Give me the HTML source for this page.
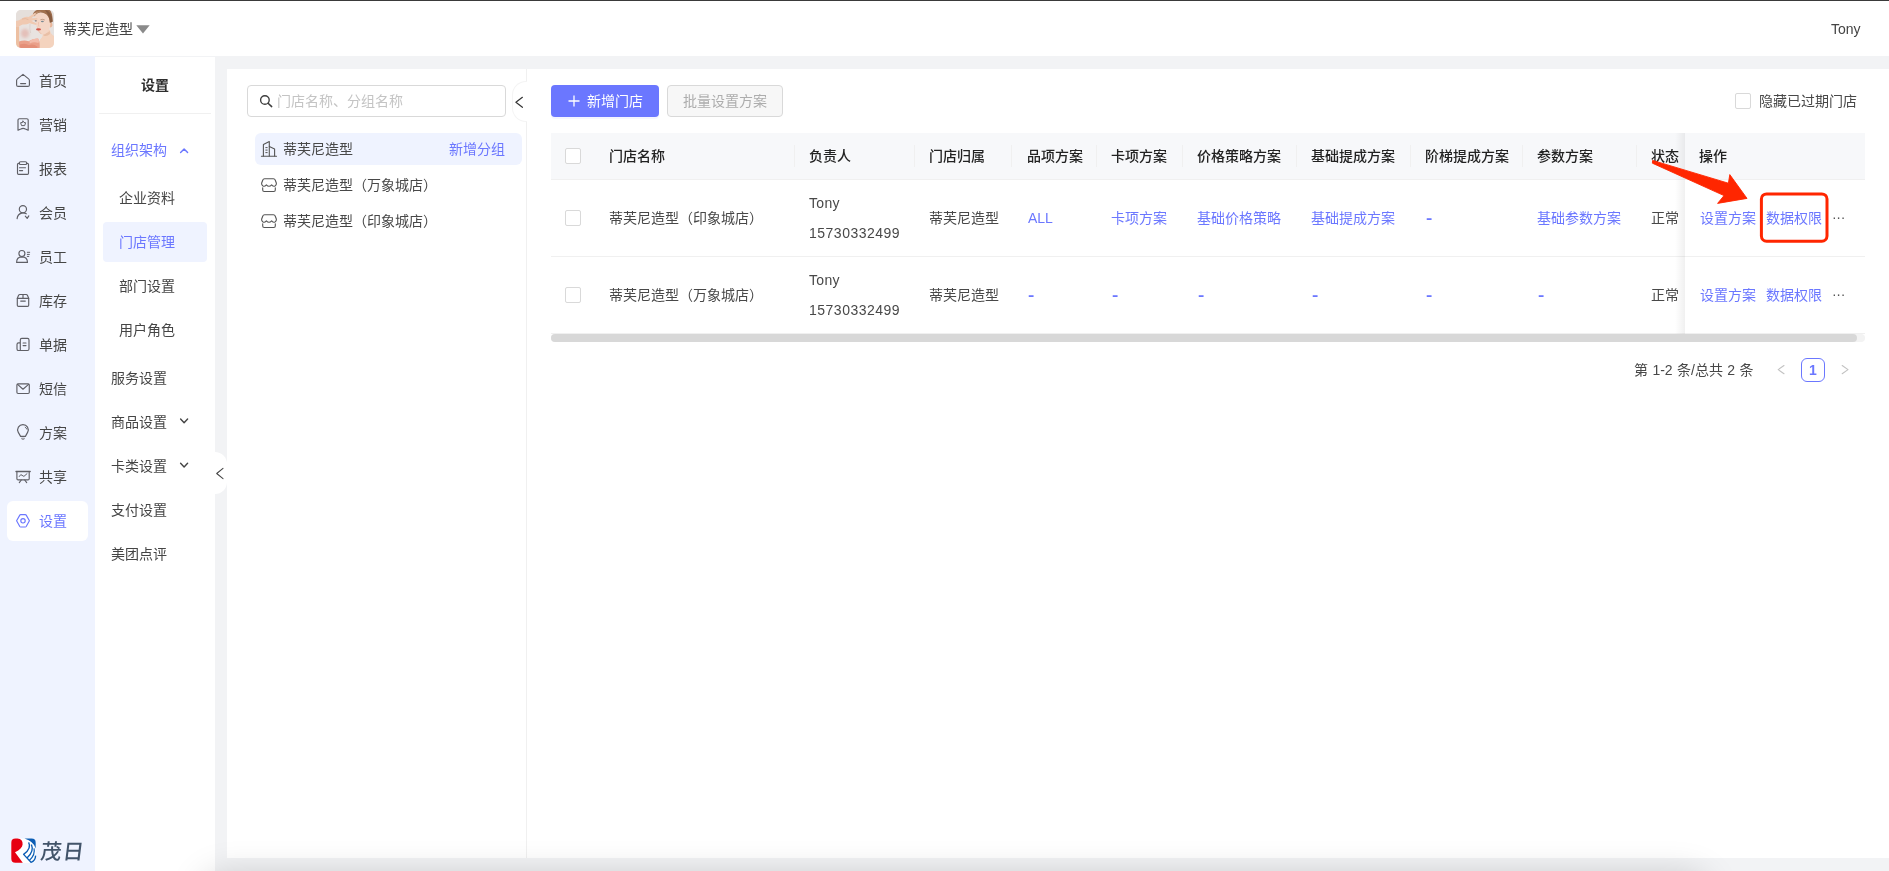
<!DOCTYPE html>
<html lang="zh-CN">
<head>
<meta charset="utf-8">
<title>门店管理</title>
<style>
*{box-sizing:border-box;margin:0;padding:0}
html,body{width:1889px;height:871px;overflow:hidden;background:#f2f3f5}
body{position:relative;font-family:"Liberation Sans","Noto Sans CJK SC",sans-serif;font-size:14px;color:#484848;line-height:20px}
.abs{position:absolute}
.t{position:absolute;white-space:nowrap;height:20px;line-height:20px}
/* top bar */
#topbar{left:0;top:0;width:1889px;height:56px;background:#fff;border-top:1px solid #3a3a3a}
#avatar{left:16px;top:10px;width:38px;height:38px;border-radius:5px;overflow:hidden}
/* left nav */
#nav1{left:0;top:56px;width:95px;height:815px;background:#eff3ff}
#nav1 .it{position:absolute;left:39px;color:#454545;height:20px;line-height:20px}
#nav1 svg{position:absolute;left:15px;width:16px;height:16px;fill:none;stroke:#555;stroke-width:1.1;stroke-linecap:round;stroke-linejoin:round}
#nav1 .act{position:absolute;left:7px;top:445px;width:81px;height:40px;background:#fff;border-radius:6px}
/* second nav */
#nav2{left:95px;top:57px;width:120px;height:814px;background:#fff}
#nav2 .it{position:absolute;color:#454545;height:20px;line-height:20px}
.blue,#nav1 .it.blue,#nav2 .it.blue{color:#6b77ff}
/* panel */
#panel{left:227px;top:69px;width:1662px;height:789px;background:#fff}
#vline{left:526px;top:69px;width:1px;height:789px;background:#f0f0f0}
a{color:#6b77ff;text-decoration:none}
.cb{position:absolute;width:16px;height:16px;border:1px solid #d9d9d9;border-radius:2px;background:#fff}
.th{position:absolute;top:146px;height:20px;line-height:20px;color:#222;font-weight:500;white-space:nowrap}
.vd{position:absolute;top:145px;width:1px;height:22px;background:#f0f0f0}
.r1{position:absolute;top:208px;height:20px;line-height:20px;white-space:nowrap}
.r2{position:absolute;top:285px;height:20px;line-height:20px;white-space:nowrap}
</style>
</head>
<body>
<div id="wrap" style="position:absolute;left:0;top:0;width:1889px;height:871px;overflow:hidden;will-change:transform">
<!-- TOP BAR -->
<div id="topbar" class="abs"></div>
<div id="avatar" class="abs">
<svg width="38" height="38" viewBox="0 0 38 38">
<defs><filter id="bl" x="-20%" y="-20%" width="140%" height="140%"><feGaussianBlur stdDeviation="0.55"/></filter><filter id="bl2" x="-50%" y="-50%" width="200%" height="200%"><feGaussianBlur stdDeviation="1.6"/></filter></defs>
<rect width="38" height="38" fill="#e8e3e0"/>
<g filter="url(#bl)">
<rect x="-2" y="-2" width="21" height="13" fill="#e5dfdb"/>
<ellipse cx="9" cy="23.4" rx="4.2" ry="4.6" fill="#e4c0b9" filter="url(#bl2)"/>
<rect x="35.5" y="-1" width="4" height="28" fill="#e6e2e0"/>
<!-- neck & shoulder -->
<path d="M23.6 30.2Q27 27 27.6 22L34 19.6Q34.2 24.6 39 26.6V39H23Z" fill="#f4d3be"/>
<path d="M27.4 22.4Q30.6 24.4 33.8 21L34 24Q30.6 27 27.4 25.4Z" fill="#e9bfa6"/>
<!-- ear -->
<path d="M33.8 12.6Q36.8 12 36.4 15.4Q36 17.6 34 17.4Z" fill="#e9b699"/>
<!-- face -->
<path d="M19 5Q24 1.4 30 3.6Q34.6 7 34.4 13.6Q34.2 19.4 30.6 23Q27.4 25.6 24.6 23.8Q21.2 20.6 20.6 16Q19.6 10 19 5Z" fill="#f4d6c6"/>
<path d="M20.6 15Q22.4 21.6 26.6 24.6Q24.4 24.4 22.6 22Q20.8 19 20.6 15Z" fill="#ecc2ad"/>
<!-- hair -->
<path d="M16.8 4.4Q18.4 -0.6 24 -0.8H33Q36.8 2 36.7 11.6L35.6 12.6L33.8 12.8Q33.8 8 30.4 4.6Q26 1.4 21.6 3.2Q19 4.2 18 6.4Z" fill="#a06f4e"/>
<path d="M29 0Q36 1 36.6 11.6L34 12.6Q33.6 6 29 0Z" fill="#875b3f"/>
<path d="M18 3.4Q21 0.6 25.6 1.4Q21.4 2.2 18.6 6.2Z" fill="#b98a68"/>
<!-- arm / hand -->
<path d="M-1 11.2Q3.6 10.6 6 8.4Q9 6.2 12.6 7L19.2 2.8L20.2 4L15.4 8.2L21.2 8L21.4 9.6L15.2 10.8L20.8 13.6L20.2 15L13.6 13.2Q10 15 6.6 14.4L3.2 16.2V39H-1Z" fill="#f0c9b1"/>
<path d="M-1 17H3V39H-1Z" fill="#edc0a2"/>
<path d="M6 9Q9.6 8 12.4 9.6" stroke="#e3b297" stroke-width="0.7" fill="none"/>
<!-- dress -->
<path d="M3 31.6Q8 29.6 12.6 31.2Q16.4 28.4 21.6 28.4Q24.4 30 23.6 39H3Z" fill="#eaa08a"/>
<path d="M13.4 31Q17.4 27.8 22.4 28.6Q23.6 30.6 22.4 33Q18 31.2 13.8 33.4Z" fill="#f3bcab"/>
<path d="M4 34.6Q9 32.4 13 35.2Q17 33.6 21.4 36.4V39H4Z" fill="#e48f78"/>
</g>
<g filter="url(#bl)">
<ellipse cx="22.5" cy="19.4" rx="2.5" ry="1.1" fill="#cf544a"/>
<ellipse cx="26.4" cy="11.5" rx="1.5" ry="0.7" fill="#7b8a93"/>
<ellipse cx="19.8" cy="10.8" rx="1.2" ry="0.6" fill="#7d7471"/>
<path d="M24.4 9.8Q26.6 8.8 28.8 10" stroke="#9a745d" stroke-width="0.6" fill="none"/>
<path d="M22.6 12Q22 15 23 16.6" stroke="#e6b9a3" stroke-width="0.6" fill="none"/>
<path d="M14 14Q13.4 19 14.6 23" stroke="#d8cdc7" stroke-width="0.7" fill="none"/>
</g>
</svg>
</div>
<div class="t" style="left:63px;top:19px;color:#444">蒂芙尼造型</div>
<svg class="abs" style="left:136px;top:25px" width="14" height="9" viewBox="0 0 14 9"><path d="M0.3 0.3h13.4L7 8.6z" fill="#8a8a8a"/></svg>
<div class="t" style="left:1831px;top:19px;color:#444">Tony</div>

<!-- NAV 1 -->
<div id="nav1" class="abs">
<div class="act"></div>
<div class="it" style="top:15px">首页</div>
<div class="it" style="top:59px">营销</div>
<div class="it" style="top:103px">报表</div>
<div class="it" style="top:147px">会员</div>
<div class="it" style="top:191px">员工</div>
<div class="it" style="top:235px">库存</div>
<div class="it" style="top:279px">单据</div>
<div class="it" style="top:323px">短信</div>
<div class="it" style="top:367px">方案</div>
<div class="it" style="top:411px">共享</div>
<div class="it blue" style="top:455px">设置</div>
</div>


<!-- NAV1 ICONS -->
<svg class="abs" style="left:0;top:56px" width="95" height="500" viewBox="0 56 95 500" fill="none" stroke="#5f5f66" stroke-width="1.15" stroke-linecap="round" stroke-linejoin="round">
<!-- home -->
<path d="M23 74.4L28.6 78.9Q29.4 79.5 29.4 80.5V84.9Q29.4 86.4 27.9 86.4H18.1Q16.6 86.4 16.6 84.9V80.5Q16.6 79.5 17.4 78.9Z"/>
<path d="M20.6 83.6H25.6"/>
<!-- marketing -->
<path d="M19.4 118.7H26.8Q28.2 118.7 28.2 120.1V130.2L25.4 128.9Q23.1 127.7 20.8 128.9L18 130.2V120.1Q18 118.7 19.4 118.7Z"/>
<path d="M23.1 121.1L24 122.5L25.6 122.7L24.7 125.6H21.5L20.6 122.7L22.2 122.5Z" stroke-width="1"/>
<!-- report -->
<path d="M19.3 163.4H18.6Q17.5 163.4 17.5 164.5V173.3Q17.5 174.4 18.6 174.4H27.4Q28.5 174.4 28.5 173.3V164.5Q28.5 163.4 27.4 163.4H26.7"/>
<rect x="19.3" y="161.7" width="7.4" height="2.8" rx="1.3"/>
<path d="M19.5 167.7H25.5M19.5 170.6H22.6"/>
<!-- member -->
<circle cx="22.9" cy="209.2" r="3.6"/>
<path d="M17.1 218.6Q17.6 214.2 21.6 213.1Q24.2 212.6 26.3 213.8"/>
<path d="M25.3 216.2L27.2 218.4L28.8 215.9"/>
<!-- staff -->
<circle cx="21.9" cy="253.5" r="3"/>
<path d="M16.6 262.4Q16.6 257 22 256.9Q27.4 257 27.5 262.4Z"/>
<path d="M27.3 252.3H29.7M27.3 254.4H29.4M27.3 256.4H28.8" stroke-width="1"/>
<!-- stock -->
<path d="M17.3 298.3V305.2Q17.3 306.4 18.5 306.4H27.5Q28.7 306.4 28.7 305.2V298.3"/>
<path d="M17.3 298.3L18.6 295.3Q19 294.5 19.9 294.5H26.1Q27 294.5 27.4 295.3L28.7 298.3Z"/>
<path d="M23 294.5V298.3M20.7 301.1H25.3"/>
<!-- bill -->
<path d="M20.3 350.5V339.9Q20.3 338.4 21.8 338.4H27.5Q29 338.4 29 339.9V349Q29 350.5 27.5 350.5H18.6Q17 350.5 17 348.9V344.4Q17 342.8 18.6 342.8H20.3"/>
<path d="M23.1 343H26M23.1 345.6H26"/>
<!-- sms -->
<rect x="16.9" y="383.8" width="12.4" height="9.7" rx="1.2"/>
<path d="M17.6 384.4L23 389.2L28.6 384.4"/>
<!-- plan (bulb) -->
<path d="M20.6 436.4H25.4L27.6 432.4A5.3 5.3 0 1 0 18.3 432.4Z"/>
<path d="M21.5 438.2H24.5" stroke="#8c8c94"/>
<path d="M22.3 439.4H23.7" stroke="#a0a0a8"/>
<path d="M25.2 427.2Q26.5 427.9 26.9 429.2" stroke-width="0.9"/>
<!-- share -->
<path d="M16 471.5H30.2" stroke-width="1.3"/>
<path d="M16.9 471.5V478.7Q16.9 479.9 18.1 479.9H28Q29.2 479.9 29.2 478.7V471.5"/>
<path d="M21.3 480L19.3 482.6M24.7 480L26.7 482.6"/>
<path d="M19.3 476.5L20.8 474.6L23.9 476.4L27 473.7" stroke-width="1"/>
<!-- settings -->
<g stroke="#6b77ff">
<path d="M16.6 520.8L19.8 515.1Q20.1 514.6 20.7 514.6H25.3Q25.9 514.6 26.2 515.1L29.4 520.8L26.2 526.5Q25.9 527 25.3 527H20.7Q20.1 527 19.8 526.5Z"/>
<circle cx="23" cy="520.8" r="2.2"/>
</g>
</svg>

<!-- NAV 2 -->
<div id="nav2" class="abs">
<div class="it" style="left:46px;top:18px;font-weight:700;color:#2e2e2e">设置</div>
<div class="abs" style="left:4px;top:56px;width:112px;height:1px;background:#f0f0f0"></div>
<div class="it blue" style="left:16px;top:83px">组织架构</div>
<div class="it" style="left:24px;top:131px">企业资料</div>
<div class="abs" style="left:8px;top:165px;width:104px;height:40px;background:#eff3ff;border-radius:4px"></div>
<div class="it blue" style="left:24px;top:175px">门店管理</div>
<div class="it" style="left:24px;top:219px">部门设置</div>
<div class="it" style="left:24px;top:263px">用户角色</div>
<div class="it" style="left:16px;top:311px">服务设置</div>
<div class="it" style="left:16px;top:355px">商品设置</div>
<div class="it" style="left:16px;top:399px">卡类设置</div>
<div class="it" style="left:16px;top:443px">支付设置</div>
<div class="it" style="left:16px;top:487px">美团点评</div>
</div>

<!-- PANEL -->
<div id="panel" class="abs"></div>
<div id="vline" class="abs"></div>

<!-- TREE PANEL -->
<div class="abs" style="left:247px;top:85px;width:259px;height:32px;border:1px solid #d9d9d9;border-radius:4px;background:#fff"></div>
<svg class="abs" style="left:259px;top:94px" width="14" height="14" viewBox="259 94 14 14" fill="none" stroke="#3c3c3c" stroke-width="1.35" stroke-linecap="round"><circle cx="264.9" cy="100" r="4.3"/><path d="M268.1 103.2L271.7 106.6" stroke-width="1.5"/></svg>
<div class="t" style="left:277px;top:91px;color:#c4c4c4">门店名称、分组名称</div>
<!-- collapse handle -->
<div class="abs" style="left:512px;top:81px;width:15px;height:41px;background:#fff;border:1px solid #f4f4f4;border-right:none;border-radius:14px 0 0 14px"></div>
<svg class="abs" style="left:514px;top:95px" width="10" height="14" viewBox="0 0 10 14" fill="none" stroke="#333" stroke-width="1.2" stroke-linecap="round" stroke-linejoin="round"><path d="M8.4 2.3L1.9 7.3L8.4 12.3"/></svg>

<div class="abs" style="left:255px;top:133px;width:267px;height:32px;background:#eff3ff;border-radius:6px"></div>
<div class="t" style="left:283px;top:139px;color:#484848">蒂芙尼造型</div>
<div class="t blue" style="left:449px;top:139px">新增分组</div>
<div class="t" style="left:283px;top:175px;color:#484848">蒂芙尼造型（万象城店）</div>
<div class="t" style="left:283px;top:211px;color:#484848">蒂芙尼造型（印象城店）</div>

<!-- TOOLBAR -->
<div class="abs" style="left:551px;top:85px;width:108px;height:32px;background:#6b77ff;border-radius:4px;box-shadow:0 2px 0 rgba(107,119,255,0.07)"></div>
<svg class="abs" style="left:568px;top:95px" width="12" height="12" viewBox="0 0 12 12" stroke="#fff" stroke-width="1.3" fill="none"><path d="M6 0.5V11.5M0.5 6H11.5"/></svg>
<div class="t" style="left:587px;top:91px;color:#fff">新增门店</div>
<div class="abs" style="left:667px;top:85px;width:116px;height:32px;background:#f7f7f7;border:1px solid #d9d9d9;border-radius:4px"></div>
<div class="t" style="left:683px;top:91px;color:#adadad">批量设置方案</div>
<div class="cb" style="left:1735px;top:93px"></div>
<div class="t" style="left:1759px;top:91px;color:#484848">隐藏已过期门店</div>

<!-- TABLE -->
<div class="abs" style="left:551px;top:133px;width:1314px;height:47px;background:#f7f8fa;border-bottom:1px solid #f0f0f0"></div>
<div class="abs" style="left:551px;top:256px;width:1314px;height:1px;background:#f0f0f0"></div>
<div class="abs" style="left:551px;top:333px;width:1314px;height:1px;background:#f0f0f0"></div>
<div class="cb" style="left:565px;top:148px"></div>
<div class="cb" style="left:565px;top:210px"></div>
<div class="cb" style="left:565px;top:287px"></div>

<div class="th" style="left:609px">门店名称</div>
<div class="th" style="left:809px">负责人</div>
<div class="th" style="left:929px">门店归属</div>
<div class="th" style="left:1027px">品项方案</div>
<div class="th" style="left:1111px">卡项方案</div>
<div class="th" style="left:1197px">价格策略方案</div>
<div class="th" style="left:1311px">基础提成方案</div>
<div class="th" style="left:1425px">阶梯提成方案</div>
<div class="th" style="left:1537px">参数方案</div>
<div class="th" style="left:1651px">状态</div>
<div class="vd" style="left:794px"></div>
<div class="vd" style="left:914px"></div>
<div class="vd" style="left:1011px"></div>
<div class="vd" style="left:1096px"></div>
<div class="vd" style="left:1182px"></div>
<div class="vd" style="left:1296px"></div>
<div class="vd" style="left:1410px"></div>
<div class="vd" style="left:1522px"></div>
<div class="vd" style="left:1636px"></div>

<div class="r1" style="left:609px">蒂芙尼造型（印象城店）</div>
<div class="t" style="left:809px;top:193px;letter-spacing:0.3px">Tony</div>
<div class="t" style="left:809px;top:223px;letter-spacing:0.5px">15730332499</div>
<div class="r1" style="left:929px">蒂芙尼造型</div>
<div class="r1 blue" style="left:1028px">ALL</div>
<div class="r1 blue" style="left:1111px">卡项方案</div>
<div class="r1 blue" style="left:1197px">基础价格策略</div>
<div class="r1 blue" style="left:1311px">基础提成方案</div>
<div class="r1 blue" style="left:1426px;font-weight:700;transform:scaleX(1.35);transform-origin:0 50%">-</div>
<div class="r1 blue" style="left:1537px">基础参数方案</div>
<div class="r1" style="left:1651px">正常</div>

<div class="r2" style="left:609px">蒂芙尼造型（万象城店）</div>
<div class="t" style="left:809px;top:270px;letter-spacing:0.3px">Tony</div>
<div class="t" style="left:809px;top:300px;letter-spacing:0.5px">15730332499</div>
<div class="r2" style="left:929px">蒂芙尼造型</div>
<div class="r2 blue" style="left:1028px;font-weight:700;transform:scaleX(1.35);transform-origin:0 50%">-</div>
<div class="r2 blue" style="left:1112px;font-weight:700;transform:scaleX(1.35);transform-origin:0 50%">-</div>
<div class="r2 blue" style="left:1198px;font-weight:700;transform:scaleX(1.35);transform-origin:0 50%">-</div>
<div class="r2 blue" style="left:1312px;font-weight:700;transform:scaleX(1.35);transform-origin:0 50%">-</div>
<div class="r2 blue" style="left:1426px;font-weight:700;transform:scaleX(1.35);transform-origin:0 50%">-</div>
<div class="r2 blue" style="left:1538px;font-weight:700;transform:scaleX(1.35);transform-origin:0 50%">-</div>
<div class="r2" style="left:1651px">正常</div>

<!-- fixed right column -->
<div class="abs" style="left:1675px;top:133px;width:10px;height:201px;background:linear-gradient(to right,rgba(0,0,0,0),rgba(0,0,0,0.06))"></div>
<div class="abs" style="left:1685px;top:133px;width:180px;height:47px;background:#f7f8fa;border-bottom:1px solid #f0f0f0"></div>
<div class="abs" style="left:1685px;top:180px;width:180px;height:76px;background:#fff"></div>
<div class="abs" style="left:1685px;top:257px;width:180px;height:76px;background:#fff"></div>
<div class="th" style="left:1699px">操作</div>
<div class="r1 blue" style="left:1700px">设置方案</div>
<div class="r1 blue" style="left:1766px">数据权限</div>
<div class="r1" style="left:1832px;top:206.7px;color:#555;letter-spacing:-0.3px">···</div>
<div class="r2 blue" style="left:1700px">设置方案</div>
<div class="r2 blue" style="left:1766px">数据权限</div>
<div class="r2" style="left:1832px;top:283.7px;color:#555;letter-spacing:-0.3px">···</div>

<!-- scrollbar -->
<div class="abs" style="left:551px;top:334px;width:1314px;height:8px;background:#f3f3f3;border-radius:4px"></div>
<div class="abs" style="left:551px;top:334px;width:1306px;height:8px;background:#d8d8d8;border-radius:4px"></div>

<!-- pagination -->
<div class="t" style="left:1634px;top:360px;color:#484848;word-spacing:0.5px">第 1-2 条/总共 2 条</div>
<svg class="abs" style="left:1776px;top:363px" width="10" height="13" viewBox="1776 363 10 13" fill="none" stroke="#c2c2c2" stroke-width="1.1" stroke-linecap="round" stroke-linejoin="round"><path d="M1784 365.5L1778.2 369.6L1784 373.7"/></svg>
<div class="abs" style="left:1801px;top:358px;width:24px;height:24px;border:1px solid #6b77ff;border-radius:6px;background:#fff"></div>
<div class="t blue" style="left:1801px;top:360px;width:24px;text-align:center;font-weight:700">1</div>
<svg class="abs" style="left:1840px;top:363px" width="10" height="13" viewBox="1840 363 10 13" fill="none" stroke="#c2c2c2" stroke-width="1.1" stroke-linecap="round" stroke-linejoin="round"><path d="M1842.2 365.5L1848 369.6L1842.2 373.7"/></svg>

<!-- red annotation -->
<svg class="abs" style="left:1640px;top:150px" width="200" height="100" viewBox="1640 150 200 100">
<path d="M1652.6 160.4 L1728.4 183.2 L1729.8 174.6 L1747 198.4 L1717.6 203.4 L1724 195.6 L1652.4 163.2 Z" fill="#ff2600" stroke="#ff2600" stroke-width="0.9" stroke-linejoin="round"/>
<rect x="1761.4" y="193.9" width="65.6" height="47.3" rx="5.2" fill="none" stroke="#ff2600" stroke-width="3"/>
</svg>

<!-- NAV2 arrows + handle -->
<svg class="abs" style="left:176px;top:140px" width="16" height="340" viewBox="176 140 16 340" fill="none" stroke="#444" stroke-width="1.4" stroke-linecap="round" stroke-linejoin="round">
<path d="M180.6 152.6L184.1 148.9L187.6 152.6" stroke="#6b77ff"/>
<path d="M180.6 419.1L184.1 422.8L187.6 419.1"/>
<path d="M180.6 463.3L184.1 467L187.6 463.3"/>
</svg>
<div class="abs" style="left:215px;top:452px;width:12px;height:42px;background:#fff;border-radius:0 12px 12px 0"></div>
<svg class="abs" style="left:214px;top:466px" width="12" height="15" viewBox="214 466 12 15" fill="none" stroke="#444" stroke-width="1.05" stroke-linecap="round" stroke-linejoin="round"><path d="M223 468.3L216.7 473.5L223 478.7"/></svg>

<!-- TREE ICONS -->
<svg class="abs" style="left:258px;top:138px" width="22" height="60" viewBox="258 138 22 60" fill="none" stroke="#555" stroke-width="1.1" stroke-linecap="round" stroke-linejoin="round">
<path d="M261.4 156.2H276.5"/>
<path d="M263.4 156V144.6L269.3 141.5V156"/>
<path d="M269.3 146.6L274.6 149V156"/>
<path d="M265.8 147.6H267.2M265.8 150.1H267.2M265.8 152.6H267.2" stroke-width="1"/>
</svg>
<svg class="abs" style="left:258px;top:174px" width="22" height="22" viewBox="258 174 22 22" fill="none" stroke="#555" stroke-width="1.1" stroke-linecap="round" stroke-linejoin="round">
<path d="M264.6 178.8H273.4Q274.8 178.8 275.3 180.2L276.4 183.3Q276.6 185 275 186Q273.4 186.8 271.6 184.8Q269 187.6 266.4 184.8Q264.6 186.8 263 186Q261.4 185 261.6 183.3L262.7 180.2Q263.2 178.8 264.6 178.8Z"/>
<path d="M262.7 187.8V190Q262.7 191.5 264.2 191.5H273.8Q275.3 191.5 275.3 190V187.8"/>
</svg>
<svg class="abs" style="left:258px;top:210px" width="22" height="22" viewBox="258 174 22 22" fill="none" stroke="#555" stroke-width="1.1" stroke-linecap="round" stroke-linejoin="round">
<path d="M264.6 178.8H273.4Q274.8 178.8 275.3 180.2L276.4 183.3Q276.6 185 275 186Q273.4 186.8 271.6 184.8Q269 187.6 266.4 184.8Q264.6 186.8 263 186Q261.4 185 261.6 183.3L262.7 180.2Q263.2 178.8 264.6 178.8Z"/>
<path d="M262.7 187.8V190Q262.7 191.5 264.2 191.5H273.8Q275.3 191.5 275.3 190V187.8"/>
</svg>

<!-- LOGO -->
<svg class="abs" style="left:10px;top:837px" width="28" height="28" viewBox="10 837 28 28">
<rect x="11" y="838.4" width="24.8" height="24.6" rx="4.5" fill="#fff"/>
<path d="M15.5 838.6H17.5Q23 839 22.6 844.5Q22.3 848.5 15 852.3L22.8 862.8H15.3Q11.3 862.8 11.3 858.8V842.8Q11.3 838.6 15.5 838.6Z" fill="#e60012"/>
<path d="M24.5 838.6H31.6Q35.7 838.6 35.7 842.8V848.6Q33.8 841.5 24.5 838.6Z" fill="#0b5db5"/>
<path d="M28.6 842.4Q32 848.4 23.6 854.4L31 862.3Q35.4 860.8 35.6 855.6" fill="none" stroke="#0b5db5" stroke-width="1.35" stroke-linejoin="round"/>
<path d="M31.4 844.6Q34.4 851.6 27 857.9" fill="none" stroke="#0b5db5" stroke-width="1.35"/>
<path d="M34 848.4Q35.6 854.6 29.4 860.4" fill="none" stroke="#0b5db5" stroke-width="1.2"/>
</svg>
<div class="t" style="left:39px;top:838px;height:28px;line-height:28px;font-size:21px;font-weight:500;color:#42546a;letter-spacing:1.2px;transform-origin:0 100%;transform:skewX(-7deg)">茂日</div>

<!-- bottom shadow -->
<div class="abs" style="left:215px;top:888px;width:1480px;height:20px;border-radius:10px;box-shadow:0 0 34px 14px rgba(0,0,0,0.17)"></div>

</div>
</body>
</html>
